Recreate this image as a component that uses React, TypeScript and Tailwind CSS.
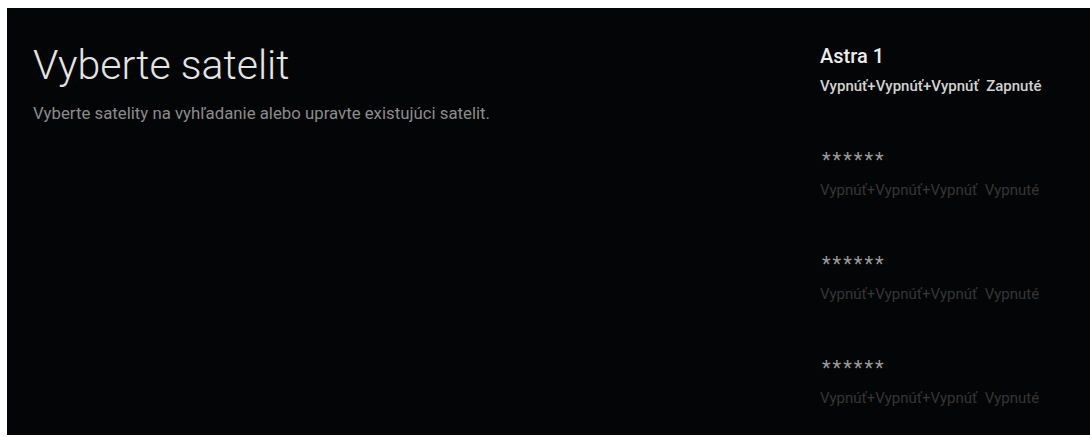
import React from 'react';

const satellites = [
    { name: 'Astra 1', status: 'Vypnúť+Vypnúť+Vypnúť  Zapnuté', active: true },
    { name: '******', status: 'Vypnúť+Vypnúť+Vypnúť  Vypnuté', active: false },
    { name: '******', status: 'Vypnúť+Vypnúť+Vypnúť  Vypnuté', active: false },
    { name: '******', status: 'Vypnúť+Vypnúť+Vypnúť  Vypnuté', active: false },
];

export default function App() {
    return (
        <div className="w-[1090px] h-[437px] bg-white pl-[7px] pt-[8px] pb-[2px] font-['Roboto','Noto_Sans',sans-serif]">
            <div className="h-full flex bg-[#040506]">
                {/* Left: heading */}
                <div className="w-[813px] pl-[26px] pt-[32px]">
                    <h1 className="text-[41px] leading-[50px] font-light text-[#e4e4e4]">Vyberte satelit</h1>
                    <p className="mt-[12px] text-[16.8px] leading-[22px] text-[#8c8c8c]">
                        Vyberte satelity na vyhľadanie alebo upravte existujúci satelit.
                    </p>
                </div>

                {/* Right: satellite list */}
                <div className="flex-1 pt-[34px]">
                    {satellites.map((sat, i) => (
                        <div key={i} className="h-[104px]">
                            {sat.active ? (
                                <div className="text-[20px] leading-[28px] font-medium text-[#ececec]">{sat.name}</div>
                            ) : (
                                <div className="pl-[2px] text-[20px] leading-[28px] tracking-[2px] text-[#9a9a9a]">{sat.name}</div>
                            )}
                            <div
                                className={`mt-[6px] text-[15px] leading-[20px] whitespace-pre ${sat.active ? 'font-medium text-[#d2d2d2]' : 'text-[#363636]'}`}
                            >
                                {sat.status}
                            </div>
                        </div>
                    ))}
                </div>
            </div>
        </div>
    );
}
